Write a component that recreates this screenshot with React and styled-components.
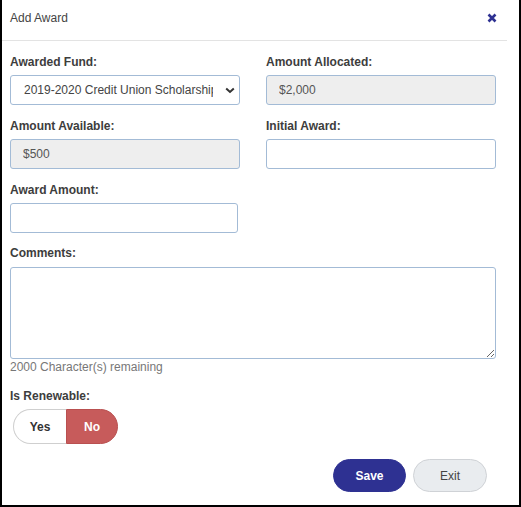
import React from "react";
import styled, { createGlobalStyle } from "styled-components";

const Global = createGlobalStyle`
  html, body { margin: 0; padding: 0; background: #fff; }
  body { font-family: "Liberation Sans", Arial, sans-serif; font-size: 12px; color: #333; }
  * { box-sizing: border-box; }
`;

const Frame = styled.div`
  width: 521px;
  height: 507px;
  border-left: 2px solid #000;
  border-right: 2px solid #000;
  border-bottom: 2px solid #000;
  background: #fff;
  display: flex;
  flex-direction: column;
`;

const Header = styled.div`
  height: 41px;
  margin-right: 12px;
  padding: 0 0 0 8px;
  border-bottom: 1px solid #e3e3e3;
  display: flex;
  align-items: center;
  justify-content: space-between;
`;

const Title = styled.div`
  font-size: 12px;
  color: #444;
  line-height: 14px;
  margin-top: -4px;
`;

const Close = styled.button`
  border: 0;
  background: none;
  padding: 0;
  width: 10px;
  height: 10px;
  margin-right: 10px;
  margin-top: -5px;
  display: flex;
  cursor: pointer;
`;

const Body = styled.div`
  padding: 14px 0 0 8px;
  width: 496px;
  display: flex;
  flex-direction: column;
`;

const Row = styled.div`
  display: grid;
  grid-template-columns: 230px 230px;
  column-gap: 26px;
  margin-bottom: ${(p) => p.$mb ?? 14}px;
`;

const Field = styled.div`
  display: flex;
  flex-direction: column;
`;

const Label = styled.label`
  display: block;
  font-weight: 700;
  color: #3d3d3d;
  line-height: 14px;
  margin-bottom: ${(p) => p.$mb ?? 6}px;
`;

const baseInput = `
  height: 30px;
  border: 1px solid #a3bbd6;
  border-radius: 3px;
  font-family: "Liberation Sans", Arial, sans-serif;
  font-size: 12px;
  color: #444;
  outline: none;
`;

const TextInput = styled.input`
  ${baseInput}
  width: ${(p) => p.$w ?? 230}px;
  padding: 0 12px;
  background: ${(p) => (p.disabled ? "#eeeeee" : "#fff")};
  color: #555;
  &:disabled { color: #555; -webkit-text-fill-color: #555; opacity: 1; }
`;

const SelectWrap = styled.div`
  position: relative;
  width: 230px;
`;

const Select = styled.select`
  ${baseInput}
  width: 230px;
  appearance: none;
  -webkit-appearance: none;
  background: #fff;
  padding: 0 26px 0 13px;
  color: #444;
`;

const Chevron = styled.svg`
  position: absolute;
  right: 5px;
  top: 12px;
  pointer-events: none;
`;

const TextArea = styled.textarea`
  ${baseInput}
  display: block;
  width: 486px;
  height: 92px;
  resize: vertical;
  padding: 6px;
`;

const Hint = styled.div`
  color: #777;
  line-height: 14px;
  margin-top: 1px;
  margin-bottom: 15px;
`;

const Toggle = styled.div`
  display: flex;
  width: 105px;
  height: 35px;
  margin-left: 3px;
`;

const ToggleOpt = styled.button`
  flex: 0 0 ${(p) => (p.$side === "left" ? 53 : 52)}px;
  height: 35px;
  font-family: "Liberation Sans", Arial, sans-serif;
  font-size: 12px;
  font-weight: 700;
  padding: 0;
  cursor: pointer;
  border: 1px solid ${(p) => (p.$active ? "#b95050" : "#cfcfcf")};
  background: ${(p) => (p.$active ? "#c75b5b" : "#fff")};
  color: ${(p) => (p.$active ? "#fff" : "#333")};
  border-radius: ${(p) => (p.$side === "left" ? "18px 0 0 18px" : "0 18px 18px 0")};
  ${(p) => (p.$side === "left" ? "border-right: 0;" : "")}
`;

const Actions = styled.div`
  display: flex;
  justify-content: flex-end;
  gap: 7px;
  margin-top: 15px;
  padding-right: 11px;
`;

const Btn = styled.button`
  height: 33px;
  width: ${(p) => (p.$primary ? 73 : 74)}px;
  border-radius: 17px;
  font-family: "Liberation Sans", Arial, sans-serif;
  font-size: 12px;
  cursor: pointer;
  font-weight: ${(p) => (p.$primary ? 700 : 400)};
  background: ${(p) => (p.$primary ? "#2e3192" : "#e9ecef")};
  color: ${(p) => (p.$primary ? "#fff" : "#444")};
  border: 1px solid ${(p) => (p.$primary ? "#2e3192" : "#cfd2d6")};
`;

export default function App() {
  return (
    <>
      <Global />
      <Frame>
        <Header>
          <Title>Add Award</Title>
          <Close aria-label="Close">
            <svg width="10" height="10" viewBox="0 0 10 10">
              <path d="M1.5 1.5 L8.5 8.5 M8.5 1.5 L1.5 8.5" stroke="#2e3192" strokeWidth="2.6" strokeLinecap="butt" />
            </svg>
          </Close>
        </Header>
        <Body>
          <Row>
            <Field>
              <Label>Awarded Fund:</Label>
              <SelectWrap>
                <Select defaultValue="a">
                  <option value="a">2019-2020 Credit Union Scholarship</option>
                </Select>
                <Chevron width="10" height="7" viewBox="0 0 10 7">
                  <path d="M1.2 1.5 L5 5 L8.8 1.5" fill="none" stroke="#333" strokeWidth="2" />
                </Chevron>
              </SelectWrap>
            </Field>
            <Field>
              <Label>Amount Allocated:</Label>
              <TextInput disabled value="$2,000" readOnly />
            </Field>
          </Row>
          <Row>
            <Field>
              <Label>Amount Available:</Label>
              <TextInput disabled value="$500" readOnly />
            </Field>
            <Field>
              <Label>Initial Award:</Label>
              <TextInput />
            </Field>
          </Row>
          <Row $mb={13}>
            <Field>
              <Label>Award Amount:</Label>
              <TextInput $w={228} />
            </Field>
          </Row>
          <Field>
            <Label $mb={7}>Comments:</Label>
            <TextArea />
          </Field>
          <Hint>2000 Character(s) remaining</Hint>
          <Field>
            <Label>Is Renewable:</Label>
            <Toggle>
              <ToggleOpt $side="left">Yes</ToggleOpt>
              <ToggleOpt $side="right" $active>No</ToggleOpt>
            </Toggle>
          </Field>
          <Actions>
            <Btn $primary>Save</Btn>
            <Btn>Exit</Btn>
          </Actions>
        </Body>
      </Frame>
    </>
  );
}
